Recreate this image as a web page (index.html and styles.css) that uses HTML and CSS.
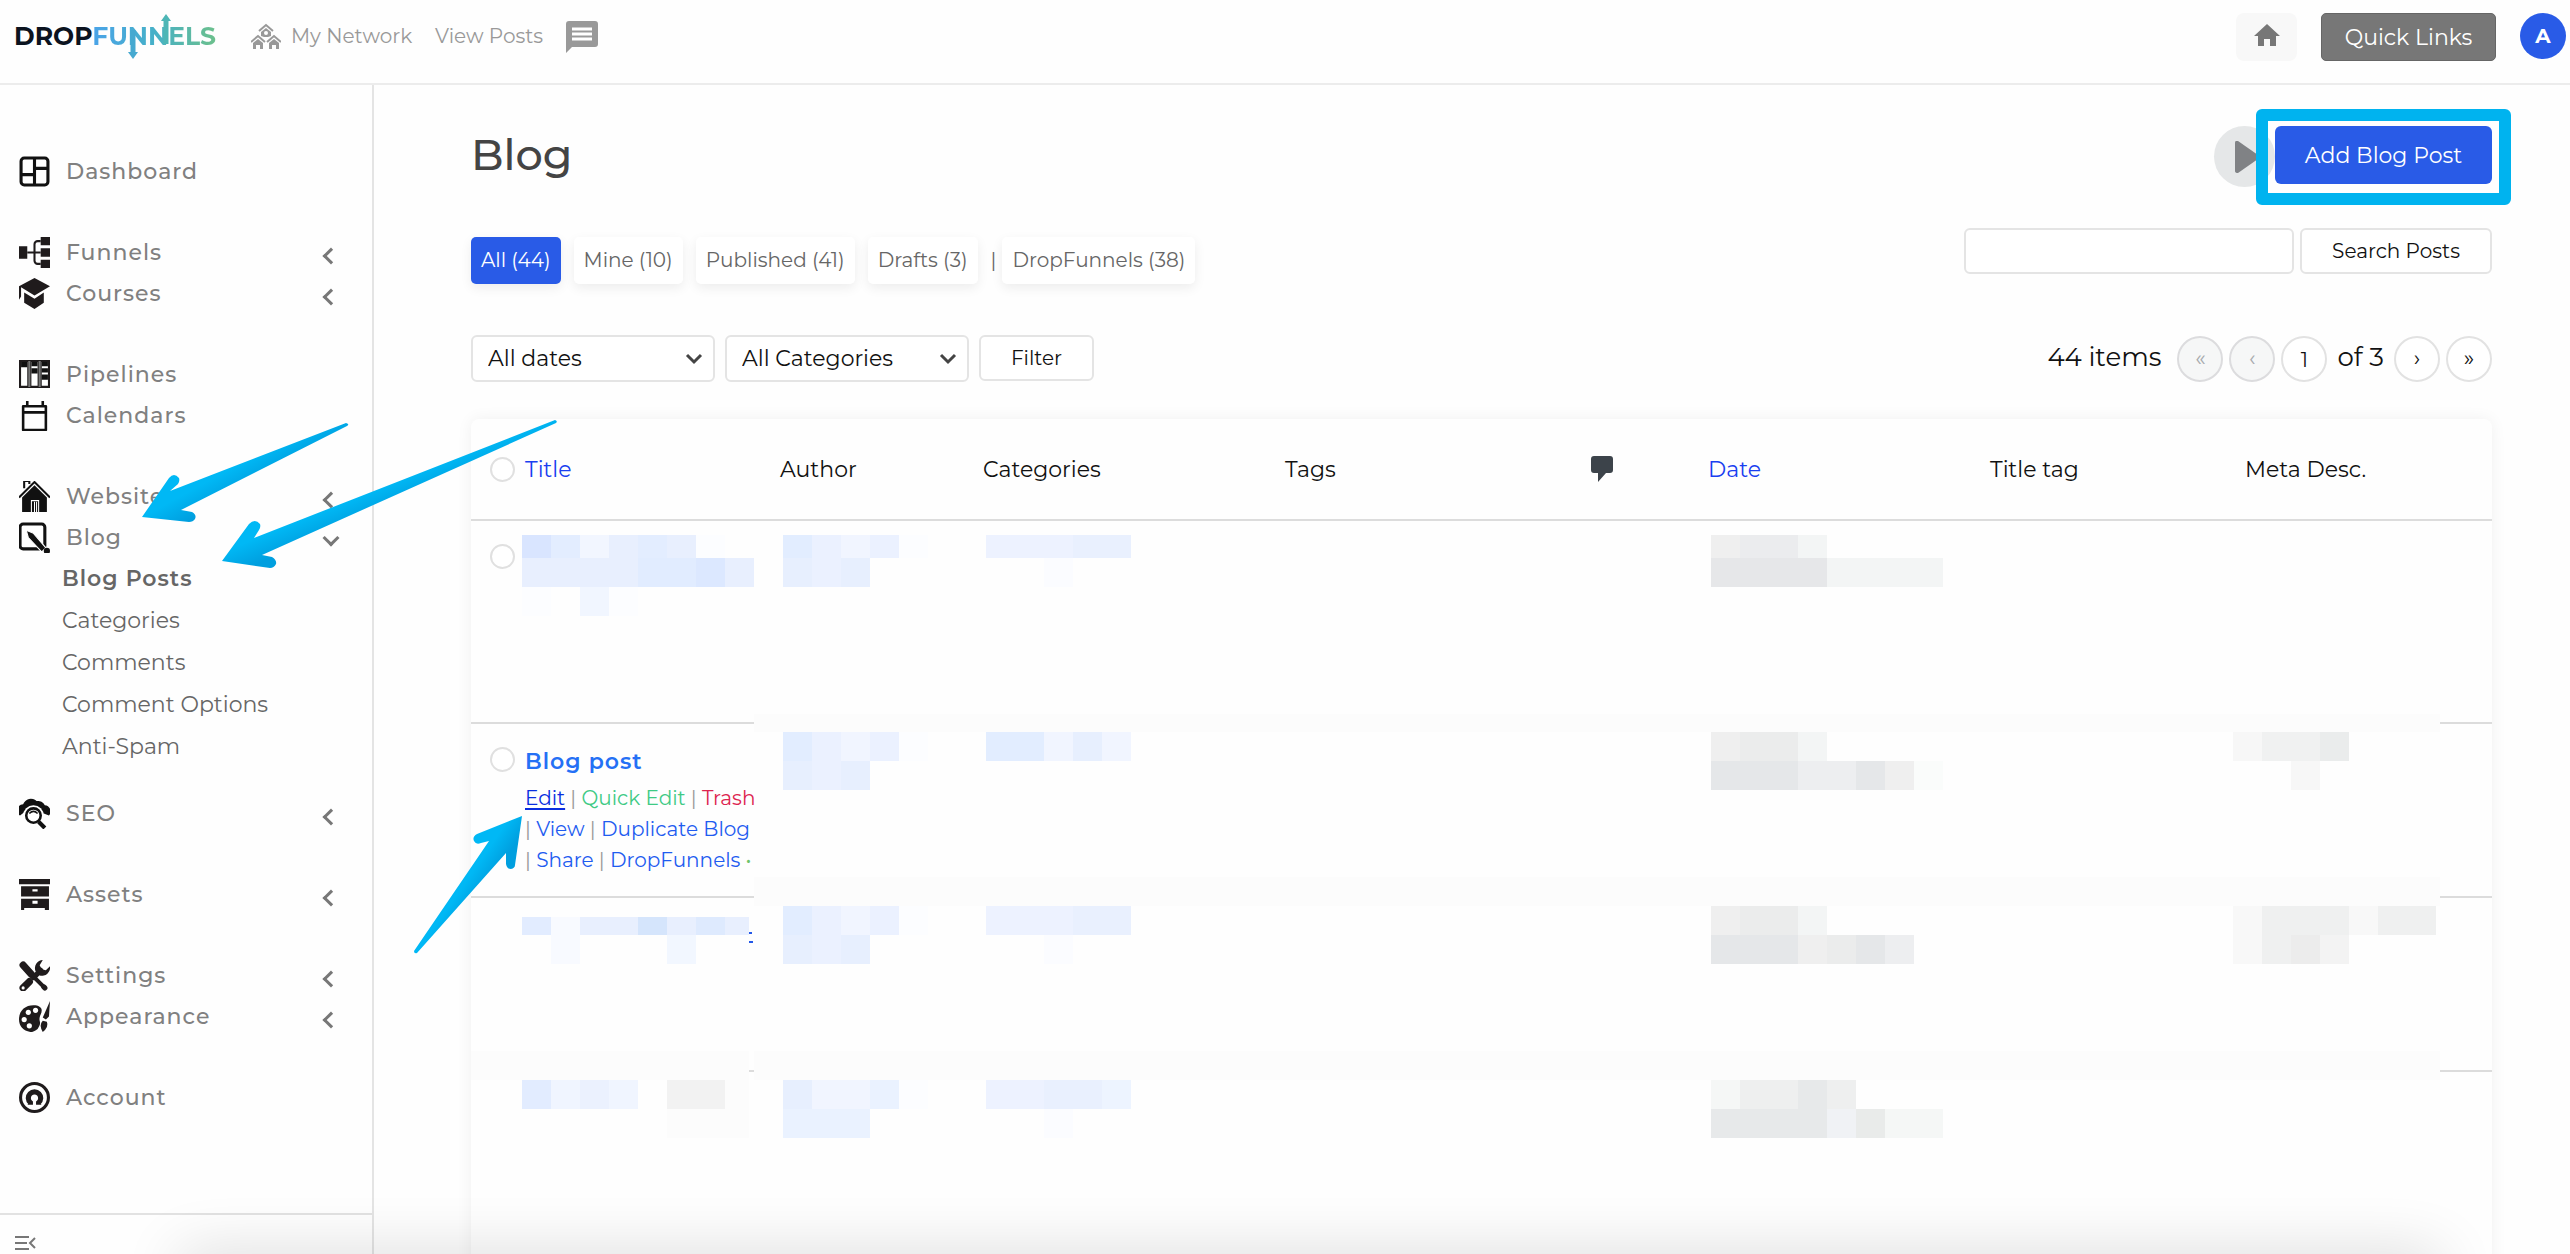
FILE: index.html
```html
<!DOCTYPE html>
<html lang="en">
<head>
<meta charset="utf-8">
<meta name="viewport" content="width=device-width, initial-scale=1">
<title>Blog</title>
<link rel="stylesheet" href="styles.css">
</head>
<body>
<header class="topbar">
  <a class="logo" href="#" aria-label="DropFunnels">
    <span class="logo-drop">DROP</span><span class="logo-funnels">FUNNELS</span>
    <svg class="logo-arrows" viewBox="0 0 200 46" aria-hidden="true">
      <path d="M118 16V40" stroke="#46a9d0" stroke-width="5"/><path d="M113 38h10l-5 7z" fill="#46a9d0"/>
      <path d="M151 30V6" stroke="#4db6b6" stroke-width="5"/><path d="M146 7h10l-5-7z" fill="#4db6b6"/>
    </svg>
  </a>
  <nav class="topnav">
    <a href="#">
      <svg width="30" height="26" viewBox="0 0 30 26" fill="none" stroke="#999" stroke-width="2"><path d="M8 8l7-6 7 6M0 19l7-6 7 6M16 19l7-6 7 6"/><path d="M10 9l5-4 5 4v4l-3 1h-4l-3-1zM2 20l5-4 5 4v6H9v-4H5v4H2zM18 20l5-4 5 4v6h-3v-4h-4v4h-3z" fill="#999" stroke="none"/><circle cx="15" cy="10" r="2" fill="#fff" stroke="none"/></svg>
      <span>My Network</span>
    </a>
    <a href="#">View Posts</a>
    <a href="#" aria-label="Messages" class="chat">
      <svg width="32" height="32" viewBox="0 0 32 32"><path d="M3 0h26a3 3 0 0 1 3 3v20a3 3 0 0 1-3 3H6l-6 6V3a3 3 0 0 1 3-3z" fill="#999"/><path d="M6 8h20M6 13h20M6 18h20" stroke="#fff" stroke-width="3"/></svg>
    </a>
  </nav>
  <div class="topactions">
    <button class="home" aria-label="Home"><svg width="26" height="22" viewBox="0 0 26 22"><path d="M13 0l13 12h-4v10h-6v-7h-6v7H4V12H0z" fill="#777"/></svg></button>
    <button class="quick">Quick Links</button>
    <button class="avatar">A</button>
  </div>
</header>

<div class="layout">
  <aside class="sidebar">
    <nav class="menu">
      <div class="group">
        <a class="item" href="#"><svg viewBox="0 0 30 30"><rect x="2" y="2" width="26" height="26" rx="3" fill="none" stroke="#111" stroke-width="3"/><path d="M15 2v26M2 18h13M15 12h13" stroke="#111" stroke-width="3"/></svg><span>Dashboard</span></a>
      </div>
      <div class="group">
        <a class="item" href="#"><svg viewBox="0 0 30 30"><path d="M0 9h8v12H0zM21 0h9v8h-9zM21 11h9v8h-9zM21 22h9v8h-9z" fill="#1f1b1c"/><path d="M8 15h13M21 4h-3a3 3 0 0 0-3 3v16a3 3 0 0 0 3 3h3" fill="none" stroke="#1f1b1c" stroke-width="2"/></svg><span>Funnels</span><i class="chev"></i></a>
        <a class="item" href="#"><svg viewBox="0 0 30 30"><path d="M15 0l15 8-15 9L2 9v9l-2 3V8zM5 14l10 6 9-6v10l-9 6-10-6z" fill="#1f1b1c"/></svg><span>Courses</span><i class="chev"></i></a>
      </div>
      <div class="group">
        <a class="item" href="#"><svg viewBox="0 0 30 30"><path d="M1 2h8v25H1zM11 2h8v25h-8zM21 2h8v25h-8z" fill="#fff" stroke="#1f1b1c" stroke-width="2"/><path d="M2 3h6v5H2zM12 3h6v4h-6zM12 9h6v5h-6zM22 3h6v4h-6zM22 9h6v4h-6zM22 15h6v5h-6z" fill="#111"/><path d="M10 2v25M20 2v25" stroke="#777" stroke-width="2"/></svg><span>Pipelines</span></a>
        <a class="item" href="#"><svg viewBox="0 0 30 30"><path d="M4 6h22v23H4zM4 12h22M8 1v5M23 1v5" fill="none" stroke="#111" stroke-width="2.5" stroke-linejoin="round"/></svg><span>Calendars</span></a>
      </div>
      <div class="group group-open">
        <a class="item" href="#"><svg viewBox="0 0 30 30"><path d="M5 7V0h5v3M0 16L15 1l15 15" fill="none" stroke="#111" stroke-width="2"/><path d="M15 4l12 12v14H3V16z" fill="#111"/><path d="M12 30V19h7v11" fill="none" stroke="#fff"/><path d="M15 20v10M17 20v10" stroke="#fff"/></svg><span>Website</span><i class="chev"></i></a>
        <a class="item" href="#"><svg viewBox="0 0 30 30"><rect x="1" y="2" width="24" height="24" rx="3" fill="none" stroke="#111" stroke-width="3"/><path d="M7 8l7 3 12 14-4 4L9 15z" fill="#111" stroke="#fff"/><circle cx="27" cy="28" r="3" fill="#111"/></svg><span>Blog</span><i class="chev chev-down"></i></a>
        <div class="submenu">
          <a class="current" href="#">Blog Posts</a>
          <a href="#">Categories</a>
          <a href="#">Comments</a>
          <a href="#">Comment Options</a>
          <a href="#">Anti-Spam</a>
        </div>
      </div>
      <div class="group">
        <a class="item" href="#"><svg viewBox="0 0 30 30"><path d="M1 17a6 6 0 0 1 3-11 8 8 0 0 1 13-3 7 7 0 0 1 8 4 6 6 0 0 1 4 10l-5-2-18-2z" fill="#111"/><circle cx="14" cy="17" r="10" fill="#fff"/><circle cx="14" cy="17" r="7" fill="#fff" stroke="#111" stroke-width="2.500"/><path d="M10 15q4-4 8 0" fill="none" stroke="#111" stroke-width="1.500"/><path d="M19 23l6 6" stroke="#111" stroke-width="4"/></svg><span>SEO</span><i class="chev"></i></a>
      </div>
      <div class="group">
        <a class="item" href="#"><svg viewBox="0 0 30 30"><path d="M0 0h30v5H0zM2 7h27v10H2zM2 19h27v11h-4v-2H5v2H2z" fill="#1f1b1c"/><path d="M13 10h5v2h-5zM13 21h5v3h-5z" fill="#fff"/></svg><span>Assets</span><i class="chev"></i></a>
      </div>
      <div class="group">
        <a class="item" href="#"><svg viewBox="0 0 30 30"><path d="M4 6l20 20" stroke="#1f1b1c" stroke-width="4" stroke-linecap="round"/><path d="M4 5l8 9" stroke="#1f1b1c" stroke-width="7" stroke-linecap="round"/><path d="M10 21l-6 6" stroke="#1f1b1c" stroke-width="7" stroke-linecap="round"/><path d="M14 17l7-7M24 26l1 1" stroke="#1f1b1c" stroke-width="5" stroke-linecap="round"/><path d="M23 0a8 8 0 0 0-7 11l4 4a8 8 0 0 0 10-9l-4 4-4-1-2-4z" fill="#1f1b1c"/><circle cx="4" cy="27" r="1.500" fill="#fff"/></svg><span>Settings</span><i class="chev"></i></a>
        <a class="item" href="#"><svg viewBox="0 0 30 30"><path d="M14 4c5 0 8 2 8 5 0 4-3 6-2 10 1 3 0 5-2 8-2 2-5 3-7 3C4 29 0 24 0 18 0 9 6 4 14 4z" fill="#1f1b1c"/><g fill="#fff"><circle cx="9" cy="11" r="2.500"/><circle cx="16" cy="9" r="2.500"/><circle cx="5" cy="18" r="2.500"/><circle cx="10" cy="24" r="2.500"/></g><path d="M30 0l-1 15-3 3-3-2z" fill="#1f1b1c"/><path d="M23 19l4 1q2 5-4 10-4-7 0-11z" fill="#1f1b1c"/></svg><span>Appearance</span><i class="chev"></i></a>
      </div>
      <div class="group">
        <a class="item" href="#"><svg viewBox="0 0 30 30"><circle cx="15" cy="15" r="13.500" fill="none" stroke="#1f1b1c" stroke-width="3"/><path d="M11 22v-2a6 6 0 1 1 8 0v2" fill="none" stroke="#1f1b1c" stroke-width="5"/></svg><span>Account</span></a>
      </div>
    </nav>
    <div class="sidebar-foot"><button aria-label="Collapse menu"><svg width="22" height="16" viewBox="0 0 22 16" fill="none" stroke="#777" stroke-width="2"><path d="M0 2h14M0 8h12M0 14h14M20 3l-5 5 5 5"/></svg></button></div>
  </aside>

  <main class="main">
    <div class="title-row">
      <h1>Blog</h1>
      <div class="title-actions">
        <button class="play" aria-label="Play video"><svg width="24" height="32" viewBox="0 0 24 32"><path d="M0 2q0-3 3-2l20 14q2 2 0 4L3 32q-3 0-3-2z" fill="#808285"/></svg></button>
        <button class="add">Add Blog Post</button>
      </div>
    </div>

    <div class="views-row">
      <div class="views">
        <a class="view active" href="#">All (44)</a>
        <a class="view" href="#">Mine (10)</a>
        <a class="view" href="#">Published (41)</a>
        <a class="view" href="#">Drafts (3)</a>
        <span class="last"><span>|</span><a class="view" href="#">DropFunnels (38)</a></span>
      </div>
      <form class="search">
        <input type="text" aria-label="Search Posts">
        <button type="button">Search Posts</button>
      </form>
    </div>

    <div class="filter-row">
      <div class="filters">
        <span class="select"><select aria-label="Date"><option>All dates</option></select><svg viewBox="0 0 18 12"><path d="M2 2l7 7 7-7" fill="none" stroke="#444" stroke-width="3"/></svg></span>
        <span class="select"><select aria-label="Category"><option>All Categories</option></select><svg viewBox="0 0 18 12"><path d="M2 2l7 7 7-7" fill="none" stroke="#444" stroke-width="3"/></svg></span>
        <button class="filter" type="button">Filter</button>
      </div>
      <div class="pager">
        <span class="count">44 items</span>
        <button disabled>«</button>
        <button disabled>‹</button>
        <input type="text" value="1" aria-label="Current page">
        <span class="of">of 3</span>
        <button>›</button>
        <button>»</button>
      </div>
    </div>

    <table class="posts">
      <colgroup><col class="c-check"><col class="c-title"><col class="c-author"><col class="c-cats"><col class="c-tags"><col class="c-comm"><col class="c-date"><col class="c-tt"><col class="c-meta"></colgroup>
      <thead>
        <tr>
          <th><input type="checkbox" aria-label="Select all"></th>
          <th class="in-title"><a href="#">Title</a></th>
          <th>Author</th>
          <th>Categories</th>
          <th>Tags</th>
          <th><svg width="22" height="26" viewBox="0 0 22 26"><path d="M3 0h16q3 0 3 3v11q0 3-3 3h-4l-8 9v-9H3q-3 0-3-3V3q0-3 3-3z" fill="#3c434a"/></svg></th>
          <th><a href="#">Date</a></th>
          <th>Title tag</th>
          <th class="in-meta">Meta Desc.</th>
        </tr>
      </thead>
      <tbody>
        <tr class="tall">
          <td class="check"><input type="checkbox" aria-label="Select post"><span class="band band-low"></span></td>
          <td><svg class="mosaic" viewBox="0 0 232 87"><path fill="#d9e5ff" d="M0 6h29v23H0z"/><path fill="#e3edff" d="M29 6h29v23H29zM116 6h29v23h-29z"/><path fill="#f2f6ff" d="M58 6h29v23H58z"/><path fill="#e8effe" d="M87 6h29v23H87zM145 6h29v23h-29zM0 29h116v29H0zM203 29h29v29h-29z"/><path fill="#fcfdff" d="M174 6h29v23h-29zM0 58h29v29H0zM87 58h29v29H87z"/><path fill="#e1ecff" d="M116 29h58v29h-58z"/><path fill="#dce8ff" d="M174 29h29v29h-29z"/><path fill="#f1f6ff" d="M58 58h29v29H58z"/></svg></td>
          <td class="inset"><svg class="mosaic" viewBox="0 0 232 87"><path fill="#e2edff" d="M0 6h29v23H0z"/><path fill="#ebf1ff" d="M29 6h29v23H29zM87 6h29v23H87zM29 29h29v29H29z"/><path fill="#f1f5ff" d="M58 6h29v23H58z"/><path fill="#fcfdff" d="M116 6h29v23h-29z"/><path fill="#e7effe" d="M0 29h29v29H0zM58 29h29v29H58z"/></svg></td>
          <td class="inset"><svg class="mosaic" viewBox="0 0 232 87"><path fill="#edf2ff" d="M0 6h87v23H0z"/><path fill="#e9f0fe" d="M87 6h58v23H87z"/><path fill="#fbfcff" d="M58 29h29v29H58z"/></svg></td>
          <td></td><td></td>
          <td class="inset"><svg class="mosaic" viewBox="0 0 232 87"><path fill="#efefef" d="M0 6h29v23H0z"/><path fill="#ebecee" d="M29 6h58v23H29z"/><path fill="#f3f5f5" d="M87 6h29v23H87zM116 29h116v29H116z"/><path fill="#e6e7e9" d="M0 29h116v29H0z"/></svg></td>
          <td></td><td></td>
        </tr>
        <tr>
          <td class="check"><input type="checkbox" aria-label="Select Blog post"><span class="band"></span></td>
          <td class="post">
            <a class="post-title" href="#">Blog post</a>
            <div class="row-actions">
              <div><a class="edit" href="#">Edit</a> | <a class="quick-edit" href="#">Quick Edit</a> | <a class="trash" href="#">Trash</a></div>
              <div>| <a href="#">View</a> | <a href="#">Duplicate Blog</a></div>
              <div>| <a href="#">Share</a> | <a href="#">DropFunnels</a> <span class="dot">•</span></div>
            </div>
          </td>
          <td class="inset"><svg class="mosaic" viewBox="0 0 232 87"><path fill="#e2edff" d="M0 0h29v29H0z"/><path fill="#ebf1ff" d="M29 0h29v29H29zM87 0h29v29H87zM29 29h29v29H29z"/><path fill="#f1f5ff" d="M58 0h29v29H58z"/><path fill="#fcfdff" d="M116 0h29v29h-29z"/><path fill="#e7effe" d="M0 29h29v29H0zM58 29h29v29H58z"/></svg></td>
          <td class="inset"><svg class="mosaic" viewBox="0 0 232 87"><path fill="#e2edff" d="M0 0h58v29H0z"/><path fill="#f1f5ff" d="M58 0h29v29H58zM116 0h29v29h-29z"/><path fill="#e7effe" d="M87 0h29v29H87z"/></svg></td>
          <td></td><td></td>
          <td class="inset"><svg class="mosaic" viewBox="0 0 232 87"><path fill="#efefef" d="M0 0h29v29H0zM174 29h29v29h-29z"/><path fill="#ebecec" d="M29 0h58v29H29z"/><path fill="#f3f5f5" d="M87 0h29v29H87z"/><path fill="#e5e7e9" d="M0 29h87v29H0zM145 29h29v29h-29z"/><path fill="#edeef0" d="M87 29h58v29H87z"/><path fill="#fafcfb" d="M203 29h29v29h-29z"/></svg></td>
          <td></td>
          <td><svg class="mosaic" viewBox="0 0 232 87"><path fill="#f7f7f7" d="M0 0h29v29H0zM58 29h29v29H58z"/><path fill="#f0f1f1" d="M29 0h58v29H29z"/><path fill="#eaecec" d="M87 0h29v29H87z"/></svg></td>
        </tr>
        <tr>
          <td class="check"><span class="band"></span><span class="band band-left"></span></td>
          <td><svg class="mosaic" viewBox="0 0 232 87"><path fill="#e2ecff" d="M0 11h29v18H0z"/><path fill="#f8faff" d="M29 11h29v18H29zM29 29h29v29H29z"/><path fill="#e8effe" d="M58 11h58v18H58zM145 11h29v18h-29zM203 11h24v18h-24z"/><path fill="#d5e5fc" d="M116 11h29v18h-29z"/><path fill="#deeafe" d="M174 11h29v18h-29z"/><path fill="#f2f7ff" d="M145 29h29v29h-29z"/><path fill="#2458e8" d="M227 26h3v2h-3zM227 35h4v2h-4z"/></svg></td>
          <td class="inset"><svg class="mosaic" viewBox="0 0 232 87"><path fill="#e2edff" d="M0 0h29v29H0z"/><path fill="#ebf1ff" d="M29 0h29v29H29zM87 0h29v29H87zM29 29h29v29H29z"/><path fill="#f1f5ff" d="M58 0h29v29H58z"/><path fill="#fcfdff" d="M116 0h29v29h-29z"/><path fill="#e7effe" d="M0 29h29v29H0zM58 29h29v29H58z"/></svg></td>
          <td class="inset"><svg class="mosaic" viewBox="0 0 232 87"><path fill="#edf2ff" d="M0 0h87v29H0z"/><path fill="#e9f0fe" d="M87 0h58v29H87z"/><path fill="#fbfcff" d="M58 29h29v29H58z"/></svg></td>
          <td></td><td></td>
          <td class="inset"><svg class="mosaic" viewBox="0 0 232 87"><path fill="#efefef" d="M0 0h29v29H0zM87 29h29v29H87z"/><path fill="#ebecec" d="M29 0h58v29H29zM116 29h29v29h-29z"/><path fill="#f3f5f5" d="M87 0h29v29H87z"/><path fill="#e5e7e9" d="M0 29h87v29H0zM145 29h29v29h-29z"/><path fill="#edeef0" d="M174 29h29v29h-29z"/></svg></td>
          <td></td>
          <td><svg class="mosaic" viewBox="0 0 232 87"><path fill="#f8f8f8" d="M0 0h29v58H0zM116 0h29v29h-29z"/><path fill="#eff0f0" d="M29 0h87v29H29zM29 29h29v29H29zM145 0h58v29h-58z"/><path fill="#ececec" d="M58 29h29v29H58z"/><path fill="#f3f3f3" d="M87 29h29v29H87z"/></svg></td>
        </tr>
        <tr class="tail">
          <td class="check"></td>
          <td><svg class="mosaic" viewBox="0 0 232 87"><path fill="#e2ecff" d="M0 0h29v29H0z"/><path fill="#f0f5ff" d="M29 0h29v29H29zM87 0h29v29H87z"/><path fill="#ebf1fe" d="M58 0h29v29H58z"/><path fill="#f2f2f2" d="M145 0h58v29h-58z"/><path fill="#fcfcfc" d="M203 0h24v29h-24zM145 29h82v29h-82z"/></svg></td>
          <td class="inset"><svg class="mosaic" viewBox="0 0 232 87"><path fill="#e7effe" d="M0 0h29v29H0z"/><path fill="#f1f5ff" d="M29 0h58v29H29z"/><path fill="#eaf2ff" d="M87 0h29v29H87zM0 29h87v29H0z"/><path fill="#fcfdff" d="M116 0h29v29h-29z"/></svg></td>
          <td class="inset"><svg class="mosaic" viewBox="0 0 232 87"><path fill="#edf2ff" d="M0 0h58v29H0z"/><path fill="#e9f0fe" d="M58 0h58v29H58z"/><path fill="#edf4ff" d="M116 0h29v29h-29z"/><path fill="#fbfcff" d="M58 29h29v29H58z"/></svg></td>
          <td></td><td></td>
          <td class="inset"><svg class="mosaic" viewBox="0 0 232 87"><path fill="#f5f7f6" d="M0 0h29v29H0zM174 29h58v29h-58z"/><path fill="#eeefef" d="M29 0h58v29H29zM116 0h29v29h-29z"/><path fill="#e7e9ea" d="M87 0h29v29H87zM0 29h116v29H0z"/><path fill="#f0f2f5" d="M116 29h29v29h-29z"/><path fill="#e9ebea" d="M145 29h29v29h-29z"/></svg></td>
          <td></td><td></td>
        </tr>
      </tbody>
    </table>
  </main>
</div>

<svg class="pointers" width="600" height="1000" viewBox="0 0 600 1000" aria-hidden="true">
  <defs>
    <linearGradient id="g1" gradientUnits="userSpaceOnUse" x1="210" y1="480" x2="222" y2="502"><stop offset="0" stop-color="#00b8f5"/><stop offset="1" stop-color="#009fdf"/></linearGradient>
    <linearGradient id="g2" gradientUnits="userSpaceOnUse" x1="330" y1="508" x2="339" y2="530"><stop offset="0" stop-color="#00b8f5"/><stop offset="1" stop-color="#009fdf"/></linearGradient>
    <linearGradient id="g3" gradientUnits="userSpaceOnUse" x1="482" y1="858" x2="498" y2="869"><stop offset="0" stop-color="#00b8f5"/><stop offset="1" stop-color="#009fdf"/></linearGradient>
  </defs>
  <path fill="url(#g1)" d="M142 517L169 478q5-6 10 0 1 3-1 6L170 491 346 423q4 1 1 3L181 510l11 2q5 3 3 7-2 3-6 3z"/>
  <path fill="url(#g2)" d="M222 561L249 524q6-6 11 0 1 3-1 6L254 538 555 420q3 1 1 3L262 555l10 2q5 3 4 7-2 4-6 4z"/>
  <path fill="url(#g3)" d="M522 816l-45 18q-5 3-3 7 2 4 7 2l8-2-75 110q0 3 3 2l89-100v11q1 5 5 5 4-1 4-4z"/>
</svg>
<div class="edge-shade"></div>
</body>
</html>
```
FILE: styles.css
```css
* { box-sizing: border-box; }
body {
  margin: 0;
  height: 100vh;
  overflow: hidden;
  display: flex;
  flex-direction: column;
  background: #fefefe;
  color: #111;
  font-family: Montserrat, Inter, sans-serif;
  font-size: 20px;
}
a { color: inherit; text-decoration: none; }
button, input, select { font: inherit; color: inherit; margin: 0; }
button { cursor: pointer; border: 0; padding: 0; background: none; }

/* top bar */
.topbar {
  flex: none;
  display: flex;
  align-items: flex-start;
  height: 85px;
  padding: 13px 4px 0 14px;
  border-bottom: 2px solid #ececec;
}
.logo {
  position: relative;
  font-size: 25px;
  line-height: 46px;
  font-weight: 700;
}
.logo-drop { color: #0b1320; }
.logo-funnels {
  color: transparent;
  background: linear-gradient(90deg, #4aa3e8, #46b0c8 50%, #6cc08c);
  -webkit-background-clip: text;
  background-clip: text;
}
.logo-arrows { position: absolute; left: 0; top: 1px; width: 100%; height: 46px; fill: none; }
.topnav { display: flex; gap: 23px; margin-left: 35px; color: #999; font-size: 20px; line-height: 46px; }
.topnav a { display: flex; gap: 10px; align-items: center; }
.chat { padding-top: 2px; }
.topactions { margin-left: auto; display: flex; gap: 24px; }
.home { width: 61px; height: 48px; border-radius: 8px; background: #f8f8f8; }
.quick { width: 175px; height: 48px; border: 1px solid #666; border-radius: 5px; background: #777; color: #fff; font-size: 22px; }
.avatar { width: 46px; height: 46px; border-radius: 50%; background: #295be7; color: #fff; font-weight: 700; }

/* sidebar */
.layout { flex: 1; min-height: 0; display: flex; }
.sidebar {
  flex: none;
  width: 374px;
  border-right: 2px solid #e4e4e4;
  display: flex;
  flex-direction: column;
}
.menu { flex: 1; min-height: 0; padding: 66px 35px 0 19px; display: flex; flex-direction: column; gap: 40px; }
.group-open { margin-bottom: -15px; }
.item { display: flex; align-items: center; height: 41px; color: #808080; font-size: 22px; font-weight: 500; letter-spacing: 1px; }
.item svg { width: 31px; height: 31px; margin-right: 16px; }
.chev {
  width: 12px;
  height: 12px;
  margin: 6px 0 0 auto;
  border: solid #777;
  border-width: 0 0 3px 3px;
  transform: rotate(45deg);
}
.chev-down { margin-top: 0; transform: rotate(-45deg); }
.submenu { padding-left: 43px; color: #666; font-size: 22px; line-height: 42px; }
.submenu a { display: block; }
.submenu .current { font-weight: 600; letter-spacing: 1px; }
.sidebar-foot { flex: none; height: 41px; border-top: 2px solid #e2e2e2; padding: 20px 15px 0; }
.sidebar-foot button, .sidebar-foot svg { display: block; }

/* page heading */
.main { flex: 1; min-width: 0; padding: 41px 78px 0 97px; }
.title-row { display: flex; justify-content: space-between; align-items: flex-start; height: 62px; }
h1 { margin: 0; color: #444; font-size: 43px; font-weight: 500; line-height: 58px; }
.title-actions { display: flex; align-items: flex-start; }
.play { width: 61px; height: 61px; border-radius: 50%; background: #e5e7e8; }
.play svg { display: block; margin-left: 21px; }
.add {
  position: relative;
  width: 217px;
  height: 58px;
  border-radius: 6px;
  background: #295be7;
  color: #fff;
  font-size: 22px;
}
.add::after {
  content: "";
  position: absolute;
  inset: -17px -19px -21px;
  border: 12px solid #00b3ef;
  border-radius: 6px;
}

/* views and search */
.views-row { display: flex; justify-content: space-between; margin-top: 40px; }
.views { display: flex; gap: 13px; padding-top: 9px; color: #666; line-height: 47px; }
.view { display: block; padding: 0 10px; border-radius: 5px; background: #fff; box-shadow: 0 4px 12px rgba(0, 0, 0, .07); }
.view.active { background: #295be7; color: #fff; }
.last { display: flex; gap: 6px; }
.search { display: flex; gap: 6px; }
.search input { width: 330px; height: 46px; border: 2px solid #e4e4e4; border-radius: 6px; background: #fff; }
.search button, .filter { height: 46px; border: 2px solid #e4e4e4; border-radius: 6px; background: #fff; }
.search button { width: 192px; }

/* filters and pager */
.filter-row { display: flex; justify-content: space-between; margin-top: 51px; }
.filters { display: flex; gap: 10px; }
.select { position: relative; width: 244px; }
.select select {
  appearance: none;
  width: 100%;
  height: 47px;
  padding: 0 15px;
  border: 2px solid #e4e4e4;
  border-radius: 6px;
  background: #fff;
  font-size: 22px;
}
.select svg { position: absolute; right: 12px; top: 18px; width: 18px; height: 12px; pointer-events: none; }
.filter { width: 115px; }
.pager { display: flex; align-items: center; gap: 6px; }
.count, .of { padding-bottom: 3px; font-size: 26px; line-height: 44px; }
.count { margin-right: 10px; }
.of { margin: 0 4px; }
.pager button, .pager input {
  width: 46px;
  height: 46px;
  border: 2px solid #e2e2e2;
  border-radius: 50%;
  background: #fff;
  text-align: center;
  font-size: 22px;
}
.pager input { padding: 2px 0 0; font-size: 20px; }
.pager button:disabled { background: #f6f7f7; color: #a7aaad; border-color: #dcdcde; }

/* posts table */
.posts {
  width: 100%;
  margin-top: 37px;
  table-layout: fixed;
  border-collapse: separate;
  border-spacing: 0;
  border-radius: 8px;
  background: #fefefe;
  box-shadow: 0 0 16px rgba(0, 0, 0, .06);
}
.c-check { width: 51px; }
.c-title { width: 258px; }
.c-author { width: 203px; }
.c-cats { width: 302px; }
.c-tags { width: 306px; }
.c-comm { width: 117px; }
.c-date { width: 282px; }
.c-tt { width: 243px; }
.posts th { height: 102px; padding: 0; border-bottom: 2px solid #dcdcdc; text-align: left; font-size: 22px; font-weight: 400; }
.posts th a { color: #1a3ff0; }
.posts th svg { display: block; }
.posts .in-title { padding-left: 3px; }
.posts .in-meta { padding-left: 12px; }
.posts input {
  appearance: none;
  display: block;
  width: 25px;
  height: 25px;
  margin-left: 19px;
  border: 2px solid #e0e0e0;
  border-radius: 50%;
  background: #fff;
}
.posts tbody tr { position: relative; }
.posts td { height: 174px; padding: 8px 0 0; border-bottom: 2px solid #dcdcdc; vertical-align: top; }
.posts .tall td { height: 203px; }
.posts .tail td { height: 203px; border-bottom: 0; }
.posts .check { padding-top: 23px; }
.posts .inset { padding-left: 3px; }
.mosaic { display: block; width: 232px; height: 87px; shape-rendering: crispEdges; }
.band { position: absolute; left: 283px; right: 52px; bottom: -8px; height: 29px; background: #fcfcfc; }
.band-low { height: 18px; }
.band-left { left: 0; right: auto; width: 278px; }
.posts .post { padding: 22px 0 0 3px; }
.post-title { display: block; color: #2470f5; font-size: 22px; font-weight: 600; line-height: 32px; letter-spacing: 1px; }
.row-actions { margin-top: 5px; line-height: 31px; color: #999; white-space: nowrap; }
.row-actions a { color: #1f5cf0; }
.row-actions .edit { color: #0a2ee0; text-decoration: underline; text-underline-offset: 3px; }
.row-actions .quick-edit { color: #3fca85; }
.row-actions .trash { color: #dd2450; }
.dot { color: #6fc46a; }

/* annotation arrows and the shade along the window's lower edge */
.pointers { position: absolute; left: 0; top: 0; pointer-events: none; }
.edge-shade {
  position: fixed;
  left: 180px;
  right: 130px;
  bottom: -40px;
  height: 40px;
  box-shadow: 0 0 60px rgba(0, 0, 0, .16);
  pointer-events: none;
}
```
